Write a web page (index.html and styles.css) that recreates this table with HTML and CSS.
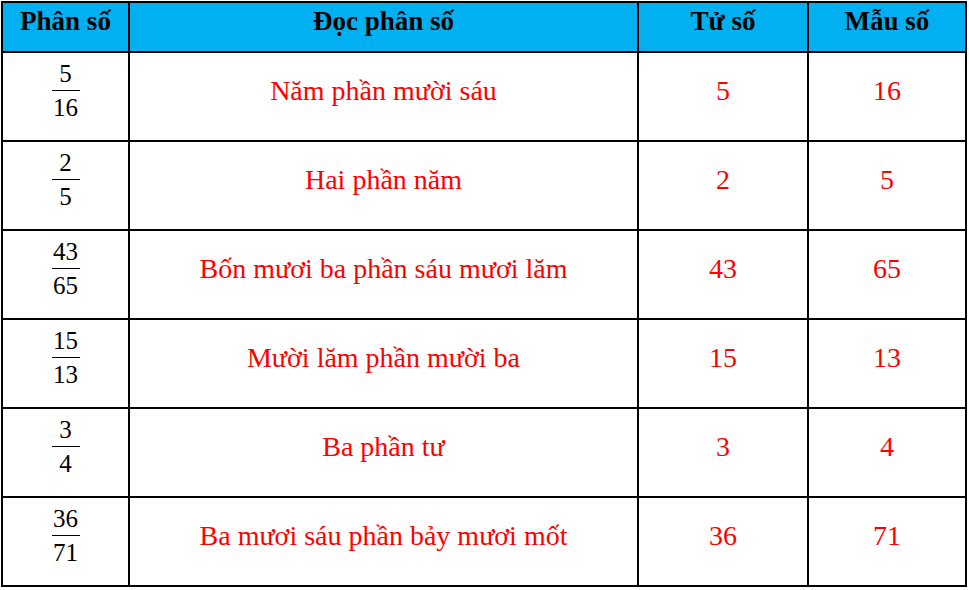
FILE: index.html
```html
<!DOCTYPE html>
<html lang="vi">
<head>
<meta charset="utf-8">
<title>Phân số</title>
<link rel="stylesheet" href="styles.css">
</head>
<body>
<table class="grid">
  <colgroup>
    <col class="c1"><col class="c2"><col class="c3"><col class="c4">
  </colgroup>
  <thead>
    <tr>
      <th>Phân số</th>
      <th>Đọc phân số</th>
      <th>Tử số</th>
      <th>Mẫu số</th>
    </tr>
  </thead>
  <tbody>
    <tr>
      <td><span class="frac"><span class="num">5</span><span class="bar"></span><span class="den">16</span></span></td>
      <td class="red">Năm phần mười sáu</td>
      <td class="red">5</td>
      <td class="red">16</td>
    </tr>
    <tr>
      <td><span class="frac"><span class="num">2</span><span class="bar"></span><span class="den">5</span></span></td>
      <td class="red">Hai phần năm</td>
      <td class="red">2</td>
      <td class="red">5</td>
    </tr>
    <tr>
      <td><span class="frac"><span class="num">43</span><span class="bar"></span><span class="den">65</span></span></td>
      <td class="red">Bốn mươi ba phần sáu mươi lăm</td>
      <td class="red">43</td>
      <td class="red">65</td>
    </tr>
    <tr>
      <td><span class="frac"><span class="num">15</span><span class="bar"></span><span class="den">13</span></span></td>
      <td class="red">Mười lăm phần mười ba</td>
      <td class="red">15</td>
      <td class="red">13</td>
    </tr>
    <tr>
      <td><span class="frac"><span class="num">3</span><span class="bar"></span><span class="den">4</span></span></td>
      <td class="red">Ba phần tư</td>
      <td class="red">3</td>
      <td class="red">4</td>
    </tr>
    <tr>
      <td><span class="frac"><span class="num">36</span><span class="bar"></span><span class="den">71</span></span></td>
      <td class="red">Ba mươi sáu phần bảy mươi mốt</td>
      <td class="red">36</td>
      <td class="red">71</td>
    </tr>
  </tbody>
</table>
</body>
</html>
```
FILE: styles.css
```css
html, body {
  margin: 0;
  padding: 0;
  background: #ffffff;
}
body {
  font-family: "Liberation Serif", "Times New Roman", serif;
  color: #000;
}
.grid {
  border-collapse: collapse;
  table-layout: fixed;
  width: 964px;
  margin: 1px 0 0 1px;
}
.c1 { width: 127px; }
.c2 { width: 509px; }
.c3 { width: 170px; }
.c4 { width: 158px; }
.grid th,
.grid td {
  border: 2px solid #000;
  text-align: center;
  padding: 0;
}
.grid th {
  background: #00b0f0;
  font-weight: bold;
  font-size: 27px;
  vertical-align: top;
  height: 48px;
  padding-top: 3px;
  box-sizing: border-box;
  height: 50px;
}
.grid td {
  height: 89px;
  box-sizing: border-box;
  vertical-align: middle;
  padding-bottom: 12px;
  font-size: 28px;
}
.red {
  color: #ff0000;
}
.frac {
  display: inline-flex;
  flex-direction: column;
  align-items: center;
  font-size: 25px;
  line-height: 25px;
  vertical-align: middle;
}
.bar {
  width: 28px;
  height: 1px;
  background: #000;
  margin: 4px 0;
}
```
